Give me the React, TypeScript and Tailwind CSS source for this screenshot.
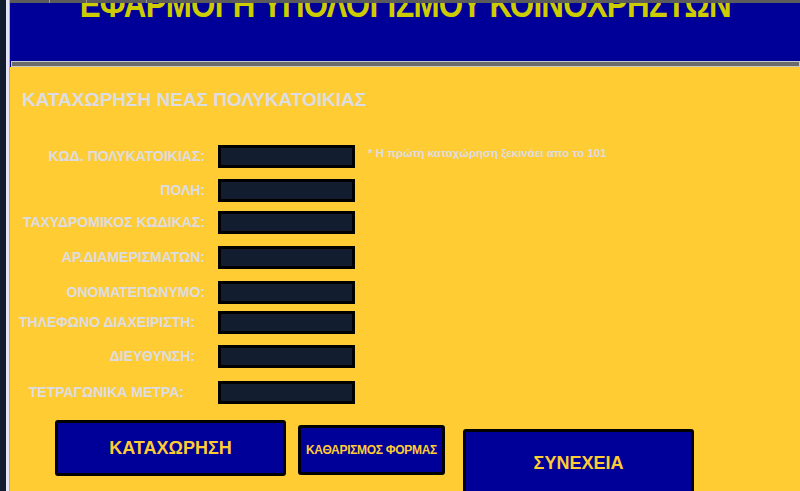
import React from "react";

const FONT = "font-['Liberation_Sans','Arial',sans-serif]";

const rows: { label: string; pr: string; mt: string }[] = [
  { label: "ΚΩΔ. ΠΟΛΥΚΑΤΟΙΚΙΑΣ:", pr: "pr-0", mt: "mt-0" },
  { label: "ΠΟΛΗ:", pr: "pr-0", mt: "mt-[11px]" },
  { label: "ΤΑΧΥΔΡΟΜΙΚΟΣ ΚΩΔΙΚΑΣ:", pr: "pr-0", mt: "mt-[9px]" },
  { label: "ΑΡ.ΔΙΑΜΕΡΙΣΜΑΤΩΝ:", pr: "pr-0", mt: "mt-[12px]" },
  { label: "ΟΝΟΜΑΤΕΠΩΝΥΜΟ:", pr: "pr-0", mt: "mt-[12px]" },
  { label: "ΤΗΛΕΦΩΝΟ ΔΙΑΧΕΙΡΙΣΤΗ:", pr: "pr-[10px]", mt: "mt-[7px]" },
  { label: "ΔΙΕΥΘΥΝΣΗ:", pr: "pr-[10px]", mt: "mt-[11px]" },
  { label: "ΤΕΤΡΑΓΩΝΙΚΑ ΜΕΤΡΑ:", pr: "pr-[21px]", mt: "mt-[13px]" },
];

export default function App() {
  return (
    <div className={`flex w-[800px] h-[491px] overflow-hidden bg-[#ffcc33] ${FONT}`}>
      {/* left frame edge */}
      <div className="w-[6px] shrink-0 bg-[#111d2f]" />
      <div className="w-[3px] shrink-0 bg-[#e4e4f6]" />
      <div className="w-[1px] shrink-0 bg-[#f5a623]" />

      <div className="flex-1 flex flex-col min-w-0">
        {/* top strip */}
        <div className="h-[3px] shrink-0 flex bg-[#5c5c5c]">
          <div className="w-[40px] border-r border-[#9a9a9a]" />
          <div className="w-[37px] border-r border-[#9a9a9a]" />
          <div className="w-[60px] border-r border-[#9a9a9a]" />
        </div>

        {/* header */}
        <div className="h-[58px] shrink-0 bg-[#000099] flex justify-center overflow-hidden">
          <h1 className="text-[36px] font-bold leading-none text-[#cccc00] whitespace-nowrap -mt-[16px] scale-x-[0.87] origin-center tracking-tight">
            ΕΦΑΡΜΟΓΗ ΥΠΟΛΟΓΙΣΜΟΥ ΚΟΙΝΟΧΡΗΣΤΩΝ
          </h1>
        </div>
        <div className="h-[6px] shrink-0 bg-[#000099] pl-[1px]">
          <div className="h-full border border-[#c8c8c8] bg-[#6b6b6b]" />
        </div>

        {/* form */}
        <div className="flex-1 shrink-0 pt-[24px]">
          <h2 className="pl-[12px] text-[19px] leading-[18px] font-bold text-[#dcdde3] whitespace-nowrap">
            ΚΑΤΑΧΩΡΗΣΗ ΝΕΑΣ ΠΟΛΥΚΑΤΟΙΚΙΑΣ
          </h2>

          <div className="mt-[36px] flex flex-col">
            {rows.map((r, i) => (
              <div key={r.label} className={`flex shrink-0 items-center h-[23px] ${r.mt}`}>
                <div className={`w-[195px] shrink-0 text-right text-[14px] font-bold text-[#dcdde3] whitespace-nowrap ${r.pr}`}>
                  {r.label}
                </div>
                <div className="ml-[13px] w-[137px] h-[23px] shrink-0 border-[3px] border-black bg-[#121d30]" />
                {i === 0 && (
                  <span className="ml-[13px] -mt-[6px] text-[11.5px] font-bold text-[#dcdde3] whitespace-nowrap">
                    * Η πρώτη καταχώρηση ξεκινάει απο το 101
                  </span>
                )}
              </div>
            ))}
          </div>

          {/* buttons */}
          <div className="mt-[16px] flex items-start pl-[45px]">
            <button className="w-[231px] h-[56px] shrink-0 border-[3px] border-black rounded-[3px] bg-[#000099] text-[18px] font-bold text-[#ffcc33]">
              ΚΑΤΑΧΩΡΗΣΗ
            </button>
            <button className="ml-[12px] mt-[5px] w-[147px] h-[50px] shrink-0 border-[3px] border-black rounded-[3px] bg-[#000099] text-[12px] font-bold text-[#ffcc33] whitespace-nowrap tracking-tight">
              ΚΑΘΑΡΙΣΜΟΣ ΦΟΡΜΑΣ
            </button>
            <button className="ml-[18px] mt-[9px] w-[231px] h-[72px] shrink-0 border-[3px] border-black rounded-[3px] bg-[#000099] text-[18px] font-bold text-[#ffcc33] pb-[3px]">
              ΣΥΝΕΧΕΙΑ
            </button>
          </div>
        </div>
      </div>
    </div>
  );
}
